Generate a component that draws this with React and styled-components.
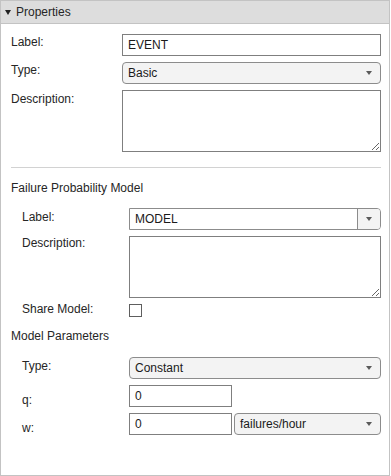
import React from "react";
import styled, { createGlobalStyle } from "styled-components";

const Global = createGlobalStyle`
  html, body { margin: 0; padding: 0; background: #ffffff; }
  * { box-sizing: border-box; }
  body { font-family: "Liberation Sans", Arial, sans-serif; font-size: 12px; color: #262626; }
`;

const Panel = styled.div`
  width: 390px;
  height: 476px;
  border: 1px solid #c3c3c3;
  display: flex;
  flex-direction: column;
  background: #fff;
`;

const Header = styled.div`
  height: 23px;
  background: #dddddd;
  border-bottom: 1px solid #c3c3c3;
  display: flex;
  align-items: center;
  padding-left: 4px;
  gap: 5px;
  font-size: 12px;
  color: #262626;
`;

const Caret = styled.span`
  width: 0;
  height: 0;
  border-left: 3.5px solid transparent;
  border-right: 3.5px solid transparent;
  border-top: 5px solid #222;
`;

const Body = styled.div`
  padding: 10px 8px 0 10px;
  display: flex;
  flex-direction: column;
`;

const Grid = styled.div`
  display: grid;
  grid-template-columns: ${(p) => p.$label}px 1fr;
  row-gap: 6px;
  padding-left: ${(p) => p.$indent || 0}px;
  margin-top: ${(p) => p.$top || 0}px;
`;

const Label = styled.div`
  line-height: 14px;
  margin-top: ${(p) => p.$pt ?? 1}px;
`;

const Field = styled.div`
  display: flex;
  gap: ${(p) => p.$gap || 0}px;
  align-items: flex-start;
`;

const TextInput = styled.div`
  height: 22px;
  width: ${(p) => (p.$w ? p.$w + "px" : "100%")};
  border: 1px solid #7f7f7f;
  background: #fff;
  display: flex;
  align-items: center;
  padding-left: 5px;
  font-size: 12px;
  color: #1a1a1a;
`;

const Select = styled.div`
  height: 22px;
  flex: 1;
  border: 1px solid #8c8c8c;
  border-radius: 4px;
  background: #f3f3f3;
  display: flex;
  align-items: center;
  justify-content: space-between;
  padding: 0 8px 0 5px;
  font-size: 12px;
  color: #1a1a1a;
`;

const Arrow = styled.span`
  width: 0;
  height: 0;
  border-left: 3.5px solid transparent;
  border-right: 3.5px solid transparent;
  border-top: 4px solid #5a5a5a;
`;

const Combo = styled.div`
  height: 22px;
  flex: 1;
  display: flex;
  border: 1px solid #8c8c8c;
  border-radius: 0 4px 4px 0;
  overflow: hidden;
`;

const ComboText = styled.div`
  flex: 1;
  background: #fff;
  display: flex;
  align-items: center;
  padding-left: 5px;
  font-size: 12px;
  color: #1a1a1a;
`;

const ComboButton = styled.div`
  width: 23px;
  border-left: 1px solid #8c8c8c;
  background: #f3f3f3;
  display: flex;
  align-items: center;
  justify-content: center;
`;

const Area = styled.textarea`
  display: block;
  width: 100%;
  height: 62px;
  border: 1px solid #7f7f7f;
  border-radius: 0;
  margin: 0;
  padding: 3px 5px;
  resize: vertical;
  outline: none;
  font-family: inherit;
`;

const Check = styled.div`
  width: 13px;
  height: 13px;
  border: 1px solid #5e5e5e;
  background: #fff;
`;

const Divider = styled.div`
  height: 1px;
  background: #d2d2d2;
  margin-top: 15px;
`;

const Title = styled.div`
  line-height: 14px;
  margin-top: ${(p) => p.$top}px;
  font-size: 12px;
`;

export default function App() {
  return (
    <>
      <Global />
      <Panel>
        <Header>
          <Caret />
          <span>Properties</span>
        </Header>
        <Body>
          <Grid $label={111}>
            <Label>Label:</Label>
            <Field>
              <TextInput>EVENT</TextInput>
            </Field>
            <Label>Type:</Label>
            <Field>
              <Select>
                Basic
                <Arrow />
              </Select>
            </Field>
            <Label $pt={2}>Description:</Label>
            <Field>
              <Area />
            </Field>
          </Grid>
          <Divider />
          <Title $top={13}>Failure Probability Model</Title>
          <Grid $label={107} $indent={11} $top={13}>
            <Label $pt={2}>Label:</Label>
            <Field>
              <Combo>
                <ComboText>MODEL</ComboText>
                <ComboButton>
                  <Arrow />
                </ComboButton>
              </Combo>
            </Field>
            <Label $pt={0}>Description:</Label>
            <Field>
              <Area />
            </Field>
            <Label $pt={-2}>Share Model:</Label>
            <Field>
              <Check />
            </Field>
          </Grid>
          <Title $top={12}>Model Parameters</Title>
          <Grid $label={107} $indent={11} $top={14}>
            <Label $pt={2}>Type:</Label>
            <Field>
              <Select>
                Constant
                <Arrow />
              </Select>
            </Field>
            <Label $pt={8}>q:</Label>
            <Field>
              <TextInput $w={103}>0</TextInput>
            </Field>
            <Label $pt={8}>w:</Label>
            <Field $gap={2}>
              <TextInput $w={103}>0</TextInput>
              <Select>
                failures/hour
                <Arrow />
              </Select>
            </Field>
          </Grid>
        </Body>
      </Panel>
    </>
  );
}
